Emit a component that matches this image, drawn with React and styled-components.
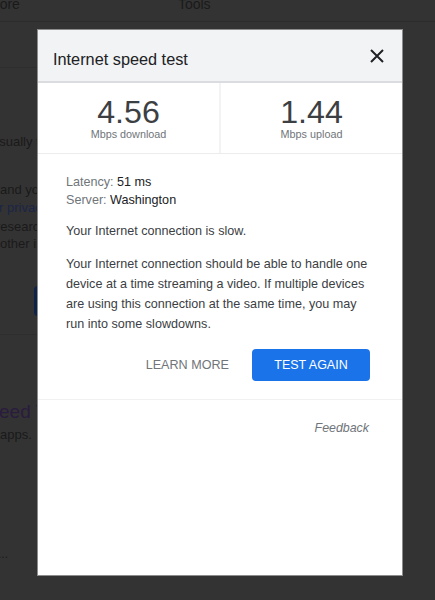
import React from "react";
import styled, { createGlobalStyle } from "styled-components";

const GlobalStyle = createGlobalStyle`
  html, body { margin: 0; padding: 0; background: #333333; }
  body { font-family: "Liberation Sans", Arial, Helvetica, sans-serif; }
  * { box-sizing: border-box; }
`;

const Backdrop = styled.div`
  position: relative;
  width: 435px;
  height: 600px;
  overflow: hidden;
  background: #333333;
`;

/* ---------- dimmed page behind the dialog ---------- */
const BgPage = styled.div`
  display: flex;
  flex-direction: column;
  font-size: 13px;
  line-height: 18px;
  color: #1a1a1a;
  white-space: nowrap;
`;

const BgNav = styled.div`
  display: flex;
  height: 26px;
  margin-top: -4px;
  line-height: 16px;
  font-size: 14px;
  border-bottom: 1px solid #2c2c2c;
`;

const BgNavItem = styled.span`
  margin-left: ${(p) => p.$x}px;
`;

/* only the strip left of the dialog is visible */
const BgStrip = styled.div`
  display: flex;
  flex-direction: column;
  width: 38px;
  overflow: hidden;
`;

const BgRule = styled.div`
  height: 1px;
  flex-shrink: 0;
  margin-top: ${(p) => p.$top}px;
  background: #2e2e2e;
`;

const BgLine = styled.div`
  margin-top: ${(p) => p.$top || 0}px;
  margin-left: ${(p) => p.$x || 0}px;
  color: ${(p) => p.$color || "#1a1a1a"};
  font-size: ${(p) => p.$size || 13}px;
  line-height: ${(p) => p.$lh || 18}px;
`;

const BgButton = styled.div`
  flex-shrink: 0;
  margin-top: ${(p) => p.$top}px;
  margin-left: 34px;
  width: 110px;
  height: 30px;
  border-radius: 4px;
  background: #0e2347;
`;

/* ---------- dialog ---------- */
const Dialog = styled.div`
  position: absolute;
  top: 30px;
  left: 38px;
  width: 364px;
  height: 545px;
  background: #ffffff;
  display: flex;
  flex-direction: column;
  box-shadow: 0 0 0 1px #8c8c8c;
`;

const Header = styled.div`
  height: 53px;
  flex-shrink: 0;
  display: flex;
  align-items: center;
  justify-content: space-between;
  padding: 0 18px 0 15px;
  background: #f1f3f4;
  border-bottom: 2px solid #dadce0;
`;

const Title = styled.h2`
  margin: 0;
  padding-top: 7px;
  font-size: 16.3px;
  font-weight: 400;
  color: #202124;
`;

const CloseButton = styled.button`
  display: flex;
  padding: 0;
  border: 0;
  background: none;
  color: #202124;
  cursor: pointer;
`;

const Stats = styled.div`
  display: grid;
  grid-template-columns: 181px 1fr;
  height: 71px;
  flex-shrink: 0;
  border-bottom: 1px solid #ececec;
`;

const Stat = styled.div`
  display: flex;
  flex-direction: column;
  align-items: center;
  padding-top: 13px;
  border-left: ${(p) => (p.$divided ? "2px solid #f1f3f4" : "0")};
`;

const StatValue = styled.div`
  font-size: 32.2px;
  line-height: 32px;
  color: #3c4043;
`;

const StatUnit = styled.div`
  font-size: 10.8px;
  line-height: 13px;
  color: #70757a;
`;

const Body = styled.div`
  display: flex;
  flex-direction: column;
  padding: 19px 32px 18px 28px;
  font-size: 12.6px;
  color: #3c4043;
  border-bottom: 1px solid #f1f1f1;
`;

const Meta = styled.div`
  display: flex;
  flex-direction: column;
  line-height: 18px;
`;

const MetaLabel = styled.span`
  color: #70757a;
`;

const MetaValue = styled.span`
  color: #202124;
`;

const Text = styled.p`
  margin: ${(p) => p.$top}px 0 0;
  line-height: 20px;
  color: #3c4043;
`;

const Actions = styled.div`
  display: flex;
  justify-content: flex-end;
  align-items: center;
  gap: 23px;
  margin-top: 15px;
`;

const TextButton = styled.button`
  padding: 0;
  border: 0;
  background: none;
  font-family: inherit;
  font-size: 12.6px;
  color: #70757a;
  cursor: pointer;
`;

const PrimaryButton = styled.button`
  width: 118px;
  height: 32px;
  border: 0;
  border-radius: 4px;
  background: #1a73e8;
  font-family: inherit;
  font-size: 12.5px;
  color: #ffffff;
  cursor: pointer;
`;

const Footer = styled.div`
  display: flex;
  justify-content: flex-end;
  padding: 18px 33px 0 0;
`;

const FeedbackLink = styled.a`
  font-size: 12.4px;
  line-height: 20px;
  font-style: italic;
  color: #70757a;
  text-decoration: none;
`;

export default function App() {
  return (
    <>
      <GlobalStyle />
      <Backdrop>
        <BgPage>
          <BgNav>
            <BgNavItem $x={-12}>More</BgNavItem>
            <BgNavItem $x={158}>Tools</BgNavItem>
          </BgNav>
          <BgStrip>
            <BgRule $top={45} />
            <BgLine $top={65} $x={-8}>usually transfers</BgLine>
            <BgLine $top={30} $x={0}>and your IP</BgLine>
            <BgLine $x={-1} $color="#1b2547">r privacy policy</BgLine>
            <BgLine $top={1} $x={-4}>research.</BgLine>
            <BgLine $top={-1} $x={0}>other information</BgLine>
            <BgButton $top={33} />
            <BgRule $top={18} />
            <BgLine $top={64} $x={-1} $size={19} $lh={26} $color="#2a1c3e">eed Test</BgLine>
            <BgLine $top={1} $x={0}>apps.</BgLine>
            <BgLine $top={101} $x={-2} $size={12}>...</BgLine>
          </BgStrip>
        </BgPage>

        <Dialog role="dialog" aria-label="Internet speed test">
          <Header>
            <Title>Internet speed test</Title>
            <CloseButton aria-label="Close">
              <svg width="14" height="14" viewBox="0 0 14 14">
                <path d="M1 1 L13 13 M13 1 L1 13" stroke="currentColor" strokeWidth="2" />
              </svg>
            </CloseButton>
          </Header>
          <Stats>
            <Stat>
              <StatValue>4.56</StatValue>
              <StatUnit>Mbps download</StatUnit>
            </Stat>
            <Stat $divided>
              <StatValue>1.44</StatValue>
              <StatUnit>Mbps upload</StatUnit>
            </Stat>
          </Stats>
          <Body>
            <Meta>
              <div>
                <MetaLabel>Latency:</MetaLabel> <MetaValue>51 ms</MetaValue>
              </div>
              <div>
                <MetaLabel>Server:</MetaLabel> <MetaValue>Washington</MetaValue>
              </div>
            </Meta>
            <Text $top={12}>Your Internet connection is slow.</Text>
            <Text $top={13}>
              Your Internet connection should be able to handle one device at a time
              streaming a video. If multiple devices are using this connection at the
              same time, you may run into some slowdowns.
            </Text>
            <Actions>
              <TextButton>LEARN MORE</TextButton>
              <PrimaryButton>TEST AGAIN</PrimaryButton>
            </Actions>
          </Body>
          <Footer>
            <FeedbackLink href="#">Feedback</FeedbackLink>
          </Footer>
        </Dialog>
      </Backdrop>
    </>
  );
}
